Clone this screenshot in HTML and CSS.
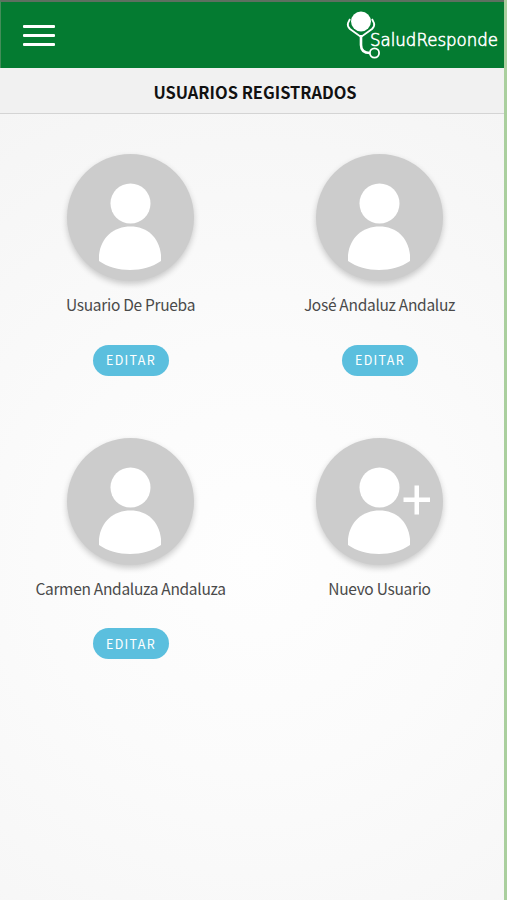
FILE: index.html
```html
<!DOCTYPE html>
<html lang="es">
<head>
  <meta charset="UTF-8">
  <meta name="viewport" content="width=device-width, initial-scale=1.0">
  <title>Salud Responde</title>
  <link rel="stylesheet" href="styles.css">
</head>
<body>

  <!-- Shared avatar shape -->
  <svg class="symbols" width="0" height="0">
    <symbol id="person" viewBox="0 0 127 127">
      <circle cx="63.5" cy="49.5" r="20"/>
      <path d="M32 107 V101 C34 83 47 72.5 63.5 72.5 C80 72.5 92 83 94 101 V107 C77 119 49 119 32 107 Z"/>
    </symbol>
  </svg>

  <!-- Header -->
  <div class="header">
    <button class="menu-btn" aria-label="Menú">
      <span></span>
      <span></span>
      <span></span>
    </button>
    <svg class="logo" width="158" height="52" viewBox="0 0 158 52">
      <circle cx="17" cy="12.5" r="10"/>
      <path class="line" d="M6 10 L4 14 Q3 17 6 20 L17 28 L28 20 Q31 17 30 14 L28 10"/>
      <path class="tube" d="M17 26 V36 Q17 44 26 44"/>
      <circle class="line" cx="30.5" cy="44" r="4.6"/>
      <text x="26" y="37" textLength="128" lengthAdjust="spacingAndGlyphs">SaludResponde</text>
    </svg>
  </div>

  <h1 class="page-title">Usuarios registrados</h1>

  <!-- Users -->
  <div class="users">
    <div class="user">
      <svg class="avatar"><use href="#person"/></svg>
      <div class="user-name">Usuario De Prueba</div>
      <button class="edit-btn">EDITAR</button>
    </div>
    <div class="user">
      <svg class="avatar"><use href="#person"/></svg>
      <div class="user-name">José Andaluz Andaluz</div>
      <button class="edit-btn">EDITAR</button>
    </div>
    <div class="user">
      <svg class="avatar"><use href="#person"/></svg>
      <div class="user-name">Carmen Andaluza Andaluza</div>
      <button class="edit-btn">EDITAR</button>
    </div>
    <div class="user">
      <svg class="avatar">
        <use href="#person"/>
        <path d="M87.5 59.5 H98.5 V47.5 H103 V59.5 H114 V64 H103 V76.5 H98.5 V64 H87.5 Z"/>
      </svg>
      <div class="user-name">Nuevo Usuario</div>
    </div>
  </div>

</body>
</html>
```
FILE: styles.css
```css
/* General Styles */
* {
  box-sizing: border-box;
}

body {
  font-family: "Noto Sans CJK SC", "Noto Sans", sans-serif;
  background: radial-gradient(circle at 50% 62%, #fefefe 0%, #fbfbfb 35%, #f3f3f3 100%);
  color: #4a4a4a;
  margin: 0;
  min-height: 900px;
  border-right: 3px solid #aacf9e;
}

.symbols {
  display: block;
}

/* Header Styles */
.header {
  background-color: #047b31;
  border-top: 2px solid #5d7060;
  border-left: 1px solid #438d59;
  height: 68px;
  padding: 0 2px 0 22px;
  display: flex;
  align-items: center;
  justify-content: space-between;
}

.menu-btn {
  display: flex;
  flex-direction: column;
  gap: 6px;
  width: 32px;
  padding: 0;
  border: none;
  background: none;
  cursor: pointer;
}

.menu-btn span {
  height: 3px;
  border-radius: 1px;
  background-color: #fff;
}

.logo {
  fill: #fff;
  overflow: visible;
}

.logo .line,
.logo .tube {
  fill: none;
  stroke: #fff;
  stroke-width: 1.8;
}

.logo .tube {
  stroke-width: 2.6;
}

.logo text {
  font-family: "DejaVu Sans", sans-serif;
  font-size: 17px;
  font-weight: 200;
  stroke: #fff;
  stroke-width: 0.6;
}

/* Title */
.page-title {
  margin: 0;
  height: 46px;
  padding-left: 6px;
  border-bottom: 1px solid #d4d4d4;
  background-color: #f1f1f1;
  color: #111;
  font-size: 16.45px;
  font-weight: bold;
  line-height: 48px;
  text-align: center;
  text-transform: uppercase;
}

/* Users grid */
.users {
  display: grid;
  grid-template-columns: 249px 249px;
  grid-auto-rows: 283.5px;
  padding: 40px 0 0 6px;
}

.user {
  display: flex;
  flex-direction: column;
  align-items: center;
}

.avatar {
  width: 127px;
  height: 127px;
  border-radius: 50%;
  background-color: #ccc;
  box-shadow: 0 3px 6px rgba(0, 0, 0, 0.2);
  fill: #fff;
}

.user-name {
  margin-top: 11px;
  font-size: 15.5px;
  letter-spacing: -0.3px;
  line-height: 24px;
  white-space: nowrap;
}

.edit-btn {
  width: 76px;
  height: 31px;
  margin-top: 28.5px;
  padding: 0 0 1px 1px;
  border: none;
  border-radius: 16px;
  background-color: #5bbfde;
  color: #fff;
  font-family: inherit;
  font-size: 12.5px;
  letter-spacing: 1.3px;
  cursor: pointer;
}
```
